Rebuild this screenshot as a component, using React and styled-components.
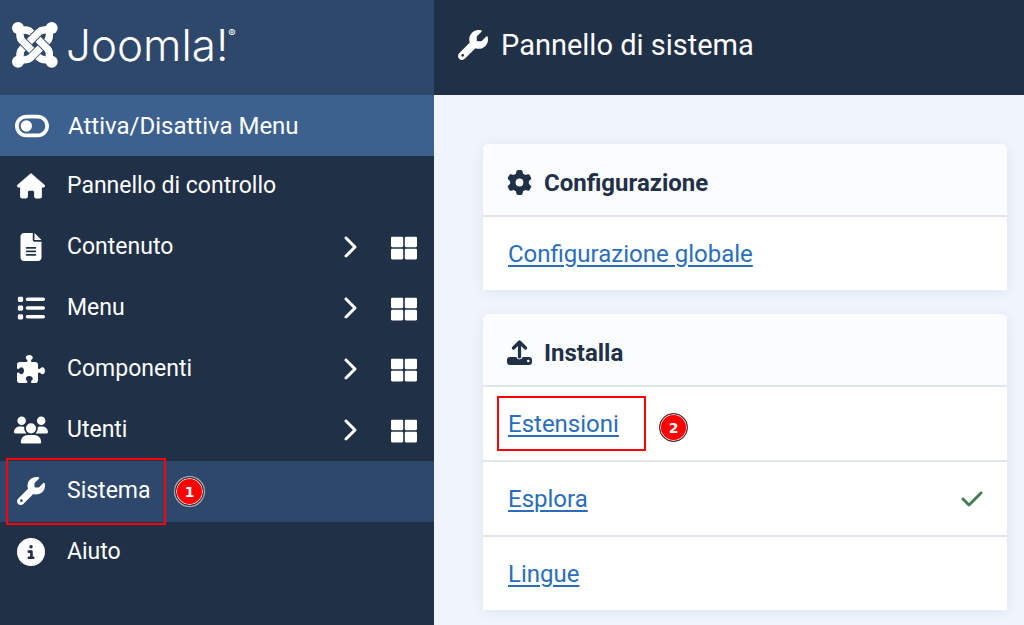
import React from 'react';
import styled, { createGlobalStyle } from 'styled-components';
import { FaThLarge } from 'react-icons/fa';
import {
  FaCheck,
  FaChevronRight,
  FaCircleInfo,
  FaFileLines,
  FaGear,
  FaHouse,
  FaList,
  FaPuzzlePiece,
  FaToggleOff,
  FaUsers,
  FaWrench,
} from 'react-icons/fa6';

const colors = {
  dark: '#1f3047',
  mid: '#2e486b',
  toggle: '#3d618f',
  page: '#f0f4fb',
  line: '#e1e5ee',
  link: '#2a6ebb',
  check: '#457d54',
  mark: '#ff0000',
};

const GlobalStyle = createGlobalStyle`
  *, *::before, *::after {
    box-sizing: border-box;
  }

  body {
    margin: 0;
    background: ${colors.page};
    color: ${colors.dark};
    font: 400 24px/32px Roboto, sans-serif;
  }
`;

const Layout = styled.div`
  display: flex;
  min-height: 100vh;
`;

const Sidebar = styled.aside`
  flex: 0 1 434px;
  background: ${colors.dark};
  color: #fff;
`;

const Brand = styled.a`
  display: flex;
  align-items: center;
  gap: 8px;
  height: 95px;
  padding: 0 12px 5px;
  background: ${colors.mid};
  color: #fff;
  text-decoration: none;
`;

const Wordmark = styled.span`
  display: flex;
  align-items: flex-start;
  font: 300 44px/44px Inter, "Open Sans", sans-serif;

  & sup {
    font: 400 11px/20px Inter, sans-serif;
  }
`;

const MenuToggle = styled.button`
  display: flex;
  align-items: center;
  width: 100%;
  height: 61px;
  padding: 0 16px 0 1px;
  border: 0;
  background: ${colors.toggle};
  color: #fff;
  font: inherit;
  cursor: pointer;
`;

const MenuList = styled.ul`
  margin: 0;
  padding: 0;
  list-style: none;
`;

const MenuItem = styled.li`
  position: relative;
  display: flex;
  align-items: center;
  height: 61px;
  padding: 0 17px 2px 0;
  background: ${props => (props.$active ? colors.mid : 'transparent')};
  font-size: 23px;
`;

const MenuLink = styled.a`
  flex: 1;
  display: flex;
  align-items: center;
  color: #fff;
  text-decoration: none;
`;

const MenuIcon = styled.span`
  display: flex;
  justify-content: center;
  flex: 0 0 62px;
  margin-right: 5px;
`;

const Expand = styled.button`
  display: flex;
  padding: 0;
  margin-right: 30px;
  border: 0;
  background: none;
  color: #fff;
  cursor: pointer;
`;

const Dashboard = styled.a`
  display: flex;
  padding-top: 3px;
  color: #fff;
`;

const Main = styled.main`
  flex: 1 1 0;
  min-width: 0;
`;

const TitleBar = styled.header`
  display: flex;
  align-items: center;
  gap: 13px;
  height: 95px;
  padding: 0 24px 6px;
  background: ${colors.dark};
  color: #fff;

  & h1 {
    margin: 0;
    font: 400 29px/40px Roboto, sans-serif;
  }
`;

const Cards = styled.div`
  display: grid;
  gap: 24px;
  padding: 49px 17px 15px 49px;
`;

const Card = styled.section`
  border-radius: 6px 6px 0 0;
  background: #fff;
  box-shadow: 0 2px 14px rgba(32, 48, 90, 0.07);
`;

const CardHeader = styled.h2`
  display: flex;
  align-items: center;
  gap: 12px;
  height: 73px;
  margin: 0;
  padding: 6px 24px 0;
  border-bottom: 2px solid ${colors.line};
  border-radius: 6px 6px 0 0;
  background: #fbfcfe;
  font: 700 24px/32px Roboto, sans-serif;
`;

const CardList = styled.ul`
  margin: 0;
  padding: 0;
  list-style: none;
`;

const CardRow = styled.li`
  position: relative;
  display: flex;
  align-items: center;
  justify-content: space-between;
  min-height: 73px;
  padding: 0 23px 0 25px;

  & + & {
    min-height: 75px;
    border-top: 2px solid ${colors.line};
  }
`;

const RowLink = styled.a`
  color: ${colors.link};
  text-decoration: underline;
  text-decoration-thickness: 2px;
  text-underline-offset: 3px;
`;

const Frame = styled.span`
  position: absolute;
  left: ${props => props.$left}px;
  top: ${props => props.$top}px;
  width: ${props => props.$width}px;
  height: ${props => props.$height}px;
  border: 2px solid ${colors.mark};
  pointer-events: none;
`;

const Badge = styled.span`
  position: absolute;
  left: ${props => props.$left}px;
  top: ${props => props.$top}px;
  display: flex;
  align-items: center;
  justify-content: center;
  width: 29px;
  height: 29px;
  border: 1px solid #26262e;
  border-radius: 50%;
  background: ${colors.mark};
  box-shadow: inset 0 0 0 1px #f3c9c9, 0 0 0 1px rgba(255, 255, 255, 0.6);
  color: #fff;
  font: 700 14px/16px "DejaVu Sans", "Open Sans", sans-serif;
`;

// Each strand is drawn over a slightly wider one in the background colour,
// the last one only covers the crossing that closes the weave.
const strands = [
  'M60 60C60 78 59 85 66 92L117 143C125 151 131 149 148 149',
  'M148 60C148 78 150 85 143 92L92 143C84 151 78 149 60 149',
  'M60 60C78 60 85 59 92 66L143 117C150 124 148 131 148 149',
  'M148 60C131 60 125 58 117 66L66 117C59 124 60 131 60 149',
  'M67 93L90 116',
];

// The outer bends, which join the corners without a gap.
const bends = [
  'M60 60C60 78 59 85 66 92',
  'M60 60C78 60 85 59 92 66',
  'M148 60C148 78 150 85 143 92',
  'M148 60C131 60 125 58 117 66',
  'M60 149C60 131 59 124 66 117',
  'M60 149C78 149 84 151 92 143',
  'M148 149C148 131 150 124 143 117',
  'M148 149C131 149 125 151 117 143',
];

const corners = [[54, 54], [155, 54], [54, 155], [155, 155]];

function JoomlaMark() {
  return (
    <svg width="46" height="46" viewBox="36 36 138 138" fill="none" aria-hidden="true">
      {strands.map(d => (
        <React.Fragment key={d}>
          <path d={d} stroke={colors.mid} strokeWidth="27" />
          <path d={d} stroke="#fff" strokeWidth="22" />
        </React.Fragment>
      ))}
      {bends.map(d => (
        <path key={d} d={d} stroke="#fff" strokeWidth="20" />
      ))}
      {corners.map(([x, y]) => (
        <circle key={`${x}-${y}`} cx={x} cy={y} r="18" fill="#fff" />
      ))}
    </svg>
  );
}

function UploadIcon() {
  return (
    <svg width="25" height="25" viewBox="0 0 25 25" aria-hidden="true">
      <path
        d="M12.5 17V2.5M6.5 8L12.5 2L18.5 8"
        fill="none"
        stroke="currentColor"
        strokeWidth="3.2"
        strokeLinecap="round"
        strokeLinejoin="round"
      />
      <path
        fill="currentColor"
        fillRule="evenodd"
        d="M3 17H9.3A3.3 3.3 0 0 0 15.7 17H22A3 3 0 0 1 25 20V22A3 3 0 0 1 22 25H3A3 3 0 0 1 0 22V20A3 3 0 0 1 3 17ZM21.3 19.7A1.3 1.3 0 1 0 21.3 22.3A1.3 1.3 0 1 0 21.3 19.7Z"
      />
    </svg>
  );
}

const menu = [
  { label: 'Pannello di controllo', icon: <FaHouse size={28} /> },
  { label: 'Contenuto', icon: <FaFileLines size={28} />, expandable: true },
  { label: 'Menu', icon: <FaList size={28} />, expandable: true },
  { label: 'Componenti', icon: <FaPuzzlePiece size={28} />, expandable: true },
  { label: 'Utenti', icon: <FaUsers size={34} />, expandable: true },
  { label: 'Sistema', icon: <FaWrench size={28} />, step: 1 },
  { label: 'Aiuto', icon: <FaCircleInfo size={28} /> },
];

const panels = [
  {
    title: 'Configurazione',
    icon: <FaGear size={25} />,
    rows: [{ label: 'Configurazione globale' }],
  },
  {
    title: 'Installa',
    icon: <UploadIcon />,
    rows: [
      { label: 'Estensioni', step: 2 },
      { label: 'Esplora', checked: true },
      { label: 'Lingue' },
    ],
  },
];

function SideMenu() {
  return (
    <Sidebar>
      <Brand href="#home" aria-label="Joomla!">
        <JoomlaMark />
        <Wordmark>
          Joomla!<sup>®</sup>
        </Wordmark>
      </Brand>
      <MenuToggle type="button">
        <MenuIcon><FaToggleOff size={34} /></MenuIcon>
        Attiva/Disattiva Menu
      </MenuToggle>
      <nav>
        <MenuList>
          {menu.map(({ label, icon, expandable, step }) => (
            <MenuItem key={label} $active={Boolean(step)}>
              <MenuLink href="#menu">
                <MenuIcon>{icon}</MenuIcon>
                {label}
              </MenuLink>
              {expandable && (
                <>
                  <Expand type="button" aria-label={`Espandi ${label}`}>
                    <FaChevronRight size={24} />
                  </Expand>
                  <Dashboard href="#dashboard" aria-label={`Pannello ${label}`}>
                    <FaThLarge size={26} />
                  </Dashboard>
                </>
              )}
              {step && (
                <>
                  <Frame $left={6} $top={-3} $width={160} $height={67} />
                  <Badge $left={175} $top={16}>{step}</Badge>
                </>
              )}
            </MenuItem>
          ))}
        </MenuList>
      </nav>
    </Sidebar>
  );
}

function Panel({ title, icon, rows }) {
  return (
    <Card>
      <CardHeader>
        {icon}
        {title}
      </CardHeader>
      <CardList>
        {rows.map(({ label, step, checked }) => (
          <CardRow key={label}>
            <RowLink href="#item">{label}</RowLink>
            {checked && <FaCheck size={24} color={colors.check} />}
            {step && (
              <>
                <Frame $left={14} $top={9} $width={149} $height={55} />
                <Badge $left={176} $top={26}>{step}</Badge>
              </>
            )}
          </CardRow>
        ))}
      </CardList>
    </Card>
  );
}

function App() {
  return (
    <>
      <GlobalStyle />
      <Layout>
        <SideMenu />
        <Main>
          <TitleBar>
            <FaWrench size={30} />
            <h1>Pannello di sistema</h1>
          </TitleBar>
          <Cards>
            {panels.map(panel => (
              <Panel key={panel.title} {...panel} />
            ))}
          </Cards>
        </Main>
      </Layout>
    </>
  );
}

export default App;
